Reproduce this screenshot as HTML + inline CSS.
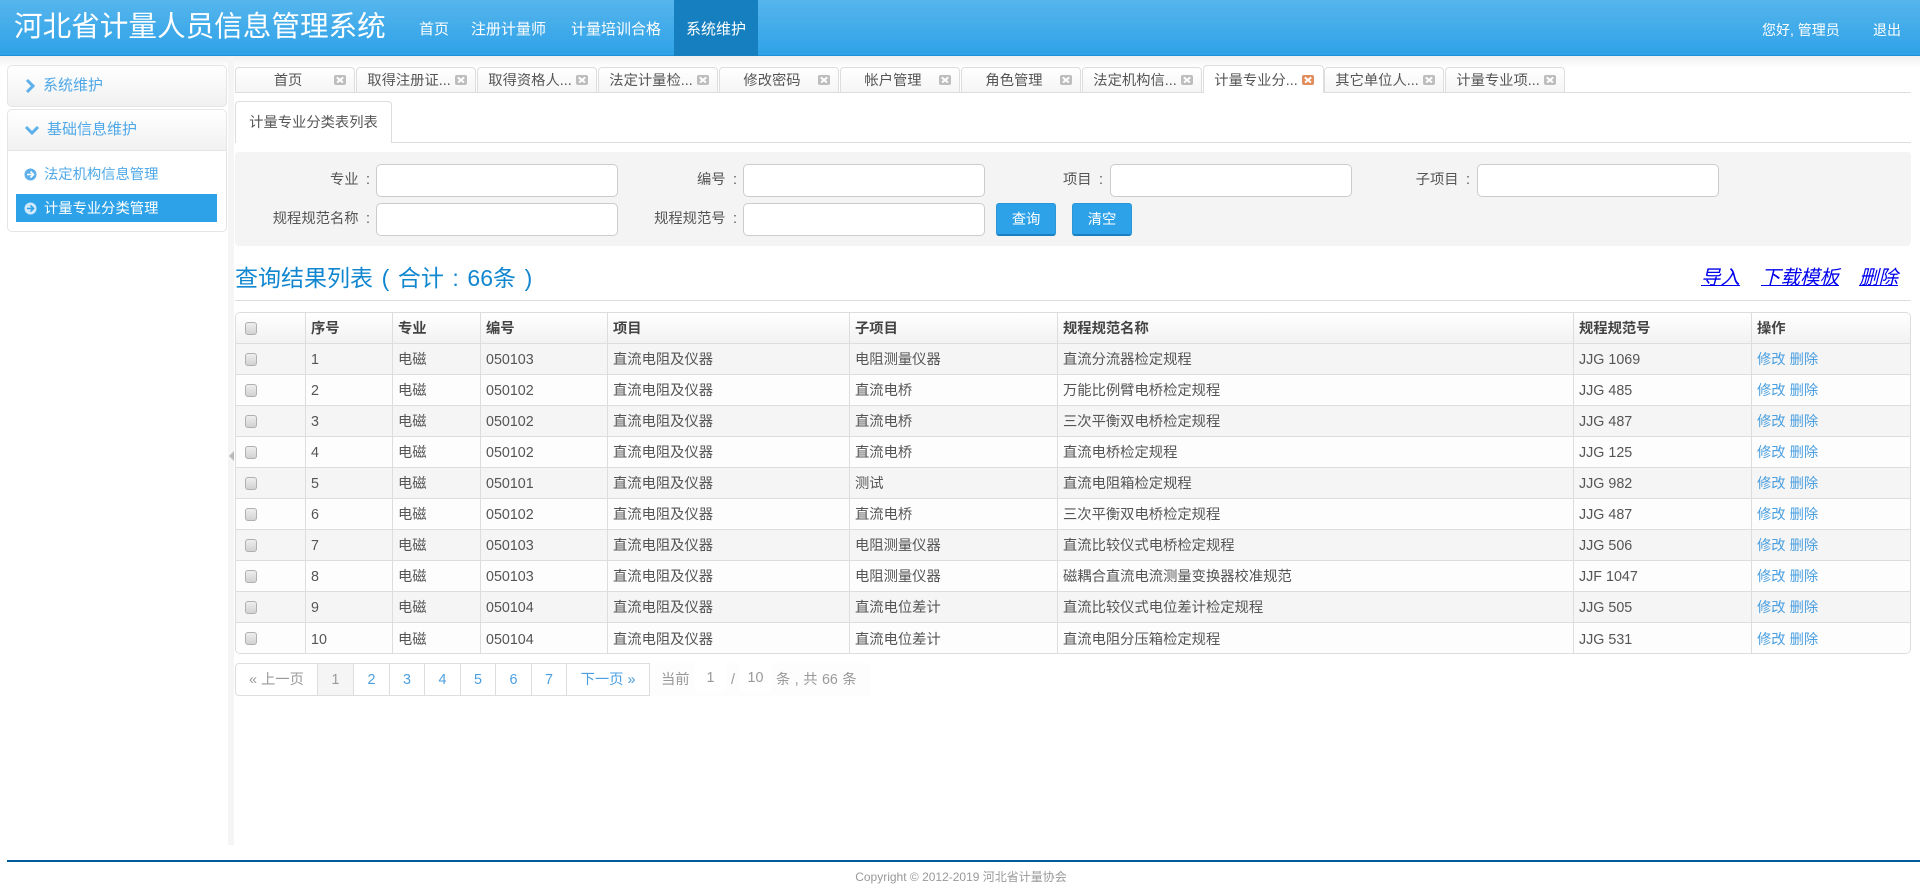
<!DOCTYPE html>
<html lang="zh"><head><meta charset="utf-8"><title>河北省计量人员信息管理系统</title>
<style>
*{box-sizing:border-box}
html,body{margin:0;padding:0;width:1920px;height:895px;overflow:hidden;background:#fff;font-family:"Liberation Sans","Noto Sans CJK SC",sans-serif;font-size:14.3px;color:#555}
.a{position:absolute;white-space:nowrap}
#hd{left:0;top:0;width:1920px;height:56px;background:linear-gradient(#56b5ec,#2ea2e8);border-bottom:1px solid #1f8fd6}
#shadow{left:0;top:56px;width:1920px;height:12px;background:linear-gradient(#f0f0f0,#fff)}
.nav{color:#fff;font-size:15px;line-height:20px;top:20px}
.panel{border:1px solid #e5e5e5;border-radius:5px;background:#fff}
.phead{background:linear-gradient(#fff,#f1f1f1)}
.side{color:#4ea8e8}
.tab{top:67px;width:120px;height:25px;background:linear-gradient(#fff,#f5f5f5);border:1px solid #ddd;border-bottom:0;border-radius:4px 4px 0 0;font-size:14.3px;color:#555}
.tab span{position:absolute;left:7px;width:90px;text-align:center;top:3px;line-height:21px}
.tab i{position:absolute;left:98px;top:7px;width:12px;height:10px;border-radius:2px;background:#bdbdbd}
.tab i:before,.tab i:after{content:"";position:absolute;left:2px;top:4px;width:8px;height:1.5px;background:#fff;transform:rotate(40deg)}
.tab i:after{transform:rotate(-40deg)}
.tab.on{top:65px;height:28px;width:121px;background:#fff;z-index:2}
.tab.on span{top:5px}.tab.on i{background:#e08f5c;top:9px}
.line{background:#ddd;height:1px}
.in{height:33px;width:242px;background:#fff;border:1px solid #ccc;border-radius:5px}
.lb{text-align:right;line-height:20px;color:#555;font-size:14.3px;word-spacing:3.5px}
.btn{top:203px;width:60px;height:33px;background:#2ea2e8;border:1px solid #2a96d8;border-bottom:2px solid #1a7fbf;border-radius:3px;color:#fff;text-align:center;line-height:32px;font-size:14.3px}
.lk{color:#0000ee;font-size:19.5px;font-style:italic;text-decoration:underline;top:266px;line-height:24px}
#tb{left:235px;top:312px;width:1676px;height:342px;border:1px solid #ddd;border-radius:5px;overflow:hidden}
table{border-collapse:separate;border-spacing:0;table-layout:fixed;width:1674px}
td,th{border-right:1px solid #ddd;border-bottom:1px solid #ddd;height:31px;padding:2px 0 0 5px;text-align:left;font-size:14.3px;line-height:20px;white-space:nowrap;overflow:hidden}
td:first-child,th:first-child{padding-top:0}
th{color:#444;font-weight:bold;background:linear-gradient(#fff,#f2f2f2)}
tr:nth-child(odd) td{background:#f5f5f5}
tr:nth-child(even) td{background:#fdfdfd}
tr:last-child td{border-bottom:0}
td:last-child,th:last-child{border-right:0}
td a{color:#4a9fe0}
.cb{display:block;margin-left:4px;width:12px;height:13px;border:1px solid #b0b0b0;border-radius:3px;background:linear-gradient(#eee,#d2d2d2)}
.pg{top:663px;height:33px;border:1px solid #ddd;border-left:0;background:#fff;color:#4a9fe0;text-align:center;line-height:33px;font-size:14.3px}
</style></head><body>
<div class="a" id="hd"></div>
<div class="a" id="shadow"></div>
<div class="a" style="left:14px;top:9px;font-size:28.6px;line-height:36px;color:#fff">河北省计量人员信息管理系统</div>
<div class="a" style="left:674px;top:0;width:84px;height:56px;background:#167fbf"></div>
<div class="a nav" style="left:419px">首页</div>
<div class="a nav" style="left:471px">注册计量师</div>
<div class="a nav" style="left:571px">计量培训合格</div>
<div class="a nav" style="left:686px">系统维护</div>
<div class="a nav" style="left:1762px;font-size:14px">您好, 管理员</div>
<div class="a nav" style="left:1873px;font-size:14px">退出</div>

<div class="a panel phead" style="left:7px;top:65px;width:220px;height:42px"></div>
<svg class="a" style="left:24px;top:78px" width="12" height="16"><path d="M3 2l6 6-6 6" fill="none" stroke="#5db0ea" stroke-width="3"/></svg>
<div class="a side" style="left:43px;top:76px;font-size:15px;line-height:20px">系统维护</div>
<div class="a panel" style="left:7px;top:109px;width:220px;height:123px"></div>
<div class="a phead" style="left:8px;top:110px;width:218px;height:41px;border-bottom:1px solid #e5e5e5;border-radius:5px 5px 0 0"></div>
<svg class="a" style="left:24px;top:124px" width="16" height="12"><path d="M2 3l6 6 6-6" fill="none" stroke="#5db0ea" stroke-width="3"/></svg>
<div class="a side" style="left:47px;top:120px;font-size:15px;line-height:20px">基础信息维护</div>
<svg class="a" style="left:24px;top:168px" width="13" height="13"><circle cx="6.5" cy="6.5" r="6" fill="#5db0ea"/><path d="M3 6.5h6M6.500 3.500l3 3-3 3" fill="none" stroke="#fff" stroke-width="1.600"/></svg>
<div class="a side" style="left:44px;top:165px;font-size:14.3px;line-height:20px">法定机构信息管理</div>
<div class="a" style="left:16px;top:194px;width:201px;height:28px;background:#2ea2e8"></div>
<svg class="a" style="left:24px;top:202px" width="13" height="13"><circle cx="6.500" cy="6.500" r="6" fill="#cfe8fa"/><path d="M3 6.500h6M6.500 3.500l3 3-3 3" fill="none" stroke="#2ea2e8" stroke-width="1.600"/></svg>
<div class="a" style="left:44px;top:199px;font-size:14.3px;line-height:20px;color:#fff">计量专业分类管理</div>

<div class="a" style="left:228px;top:57px;width:6px;height:788px;background:#f5f5f5"></div>
<div class="a" style="left:229px;top:451px;width:0;height:0;border-style:solid;border-width:5px 5px 5px 0;border-color:transparent #bbb transparent transparent"></div>

<div class="a line" style="left:235px;top:92px;width:1676px"></div>
<div class="a tab" style="left:235px"><span>首页</span><i></i></div>
<div class="a tab" style="left:356px"><span>取得注册证...</span><i></i></div>
<div class="a tab" style="left:477px"><span>取得资格人...</span><i></i></div>
<div class="a tab" style="left:598px"><span>法定计量检...</span><i></i></div>
<div class="a tab" style="left:719px"><span>修改密码</span><i></i></div>
<div class="a tab" style="left:840px"><span>帐户管理</span><i></i></div>
<div class="a tab" style="left:961px"><span>角色管理</span><i></i></div>
<div class="a tab" style="left:1082px"><span>法定机构信...</span><i></i></div>
<div class="a tab on" style="left:1203px"><span>计量专业分...</span><i></i></div>
<div class="a tab" style="left:1324px"><span>其它单位人...</span><i></i></div>
<div class="a tab" style="left:1445px"><span>计量专业项...</span><i></i></div>

<div class="a line" style="left:235px;top:142px;width:1676px"></div>
<div class="a" style="left:235px;top:101px;width:157px;height:42px;background:#fff;border:1px solid #ddd;border-bottom:0;border-radius:4px 4px 0 0;text-align:center;line-height:42px;font-size:14.3px;color:#555">计量专业分类表列表</div>

<div class="a" style="left:235px;top:152px;width:1676px;height:94px;background:#f4f4f4;border-radius:4px"></div>
<div class="a lb" style="left:240px;width:130px;top:170px">专业 :</div><div class="a in" style="left:376px;top:164px"></div>
<div class="a lb" style="left:607px;width:130px;top:170px">编号 :</div><div class="a in" style="left:743px;top:164px"></div>
<div class="a lb" style="left:973px;width:130px;top:170px">项目 :</div><div class="a in" style="left:1110px;top:164px"></div>
<div class="a lb" style="left:1340px;width:130px;top:170px">子项目 :</div><div class="a in" style="left:1477px;top:164px"></div>
<div class="a lb" style="left:240px;width:130px;top:209px">规程规范名称 :</div><div class="a in" style="left:376px;top:203px"></div>
<div class="a lb" style="left:607px;width:130px;top:209px">规程规范号 :</div><div class="a in" style="left:743px;top:203px"></div>
<div class="a btn" style="left:996px">查询</div>
<div class="a btn" style="left:1072px">清空</div>

<div class="a" style="left:235px;top:262px;font-size:23px;line-height:32px;color:#1187d0;word-spacing:2.2px">查询结果列表 ( 合计 : 66条 )</div>
<a class="a lk" style="left:1701px">导入</a>
<a class="a lk" style="left:1761px">下载模板</a>
<a class="a lk" style="left:1859px">删除</a>
<div class="a line" style="left:235px;top:300px;width:1676px"></div>

<div class="a" id="tb"><table>
<colgroup><col style="width:70px"><col style="width:87px"><col style="width:88px"><col style="width:127px"><col style="width:242px"><col style="width:208px"><col style="width:516px"><col style="width:178px"><col style="width:158px"></colgroup>
<thead><tr><th><span class="cb"></span></th><th>序号</th><th>专业</th><th>编号</th><th>项目</th><th>子项目</th><th>规程规范名称</th><th>规程规范号</th><th>操作</th></tr></thead>
<tbody>
<tr><td><span class="cb"></span></td><td>1</td><td>电磁</td><td>050103</td><td>直流电阻及仪器</td><td>电阻测量仪器</td><td>直流分流器检定规程</td><td>JJG 1069</td><td><a>修改</a> <a>删除</a></td></tr>
<tr><td><span class="cb"></span></td><td>2</td><td>电磁</td><td>050102</td><td>直流电阻及仪器</td><td>直流电桥</td><td>万能比例臂电桥检定规程</td><td>JJG 485</td><td><a>修改</a> <a>删除</a></td></tr>
<tr><td><span class="cb"></span></td><td>3</td><td>电磁</td><td>050102</td><td>直流电阻及仪器</td><td>直流电桥</td><td>三次平衡双电桥检定规程</td><td>JJG 487</td><td><a>修改</a> <a>删除</a></td></tr>
<tr><td><span class="cb"></span></td><td>4</td><td>电磁</td><td>050102</td><td>直流电阻及仪器</td><td>直流电桥</td><td>直流电桥检定规程</td><td>JJG 125</td><td><a>修改</a> <a>删除</a></td></tr>
<tr><td><span class="cb"></span></td><td>5</td><td>电磁</td><td>050101</td><td>直流电阻及仪器</td><td>测试</td><td>直流电阻箱检定规程</td><td>JJG 982</td><td><a>修改</a> <a>删除</a></td></tr>
<tr><td><span class="cb"></span></td><td>6</td><td>电磁</td><td>050102</td><td>直流电阻及仪器</td><td>直流电桥</td><td>三次平衡双电桥检定规程</td><td>JJG 487</td><td><a>修改</a> <a>删除</a></td></tr>
<tr><td><span class="cb"></span></td><td>7</td><td>电磁</td><td>050103</td><td>直流电阻及仪器</td><td>电阻测量仪器</td><td>直流比较仪式电桥检定规程</td><td>JJG 506</td><td><a>修改</a> <a>删除</a></td></tr>
<tr><td><span class="cb"></span></td><td>8</td><td>电磁</td><td>050103</td><td>直流电阻及仪器</td><td>电阻测量仪器</td><td>磁耦合直流电流测量变换器校准规范</td><td>JJF 1047</td><td><a>修改</a> <a>删除</a></td></tr>
<tr><td><span class="cb"></span></td><td>9</td><td>电磁</td><td>050104</td><td>直流电阻及仪器</td><td>直流电位差计</td><td>直流比较仪式电位差计检定规程</td><td>JJG 505</td><td><a>修改</a> <a>删除</a></td></tr>
<tr><td><span class="cb"></span></td><td>10</td><td>电磁</td><td>050104</td><td>直流电阻及仪器</td><td>直流电位差计</td><td>直流电阻分压箱检定规程</td><td>JJG 531</td><td><a>修改</a> <a>删除</a></td></tr>
</tbody></table></div>

<div class="a" style="left:649px;top:663px;width:222px;height:33px;background:#fdfdfd;border-radius:0 5px 5px 0"></div>
<div class="a pg" style="left:235px;width:83px;border-left:1px solid #ddd;border-radius:4px 0 0 4px;color:#999">« 上一页</div>
<div class="a pg" style="left:318px;width:36px;background:#f5f5f5;color:#999">1</div>
<div class="a pg" style="left:354px;width:36px">2</div>
<div class="a pg" style="left:390px;width:35px">3</div>
<div class="a pg" style="left:425px;width:36px">4</div>
<div class="a pg" style="left:461px;width:35px">5</div>
<div class="a pg" style="left:496px;width:36px">6</div>
<div class="a pg" style="left:532px;width:35px">7</div>
<div class="a pg" style="left:567px;width:83px">下一页 »</div>
<div class="a" style="left:661px;top:670px;color:#999;line-height:20px">当前</div>
<div class="a" style="left:694px;top:663px;width:33px;height:28px;background:#fff;border-radius:4px;color:#999;text-align:center;line-height:30px">1</div>
<div class="a" style="left:731px;top:670px;color:#999;line-height:20px">/</div>
<div class="a" style="left:739px;top:663px;width:33px;height:28px;background:#fff;border-radius:4px;color:#999;text-align:center;line-height:30px">10</div>
<div class="a" style="left:776px;top:670px;color:#999;line-height:20px;word-spacing:.5px">条 , 共 66 条</div>

<div class="a" style="left:7px;top:860px;width:1913px;height:2px;background:#005b9c"></div>
<div class="a" style="left:0;width:1920px;top:868px;text-align:center;font-size:12px;line-height:18px;color:#999;padding-left:2px">Copyright © 2012-2019 河北省计量协会</div>
</body></html>
